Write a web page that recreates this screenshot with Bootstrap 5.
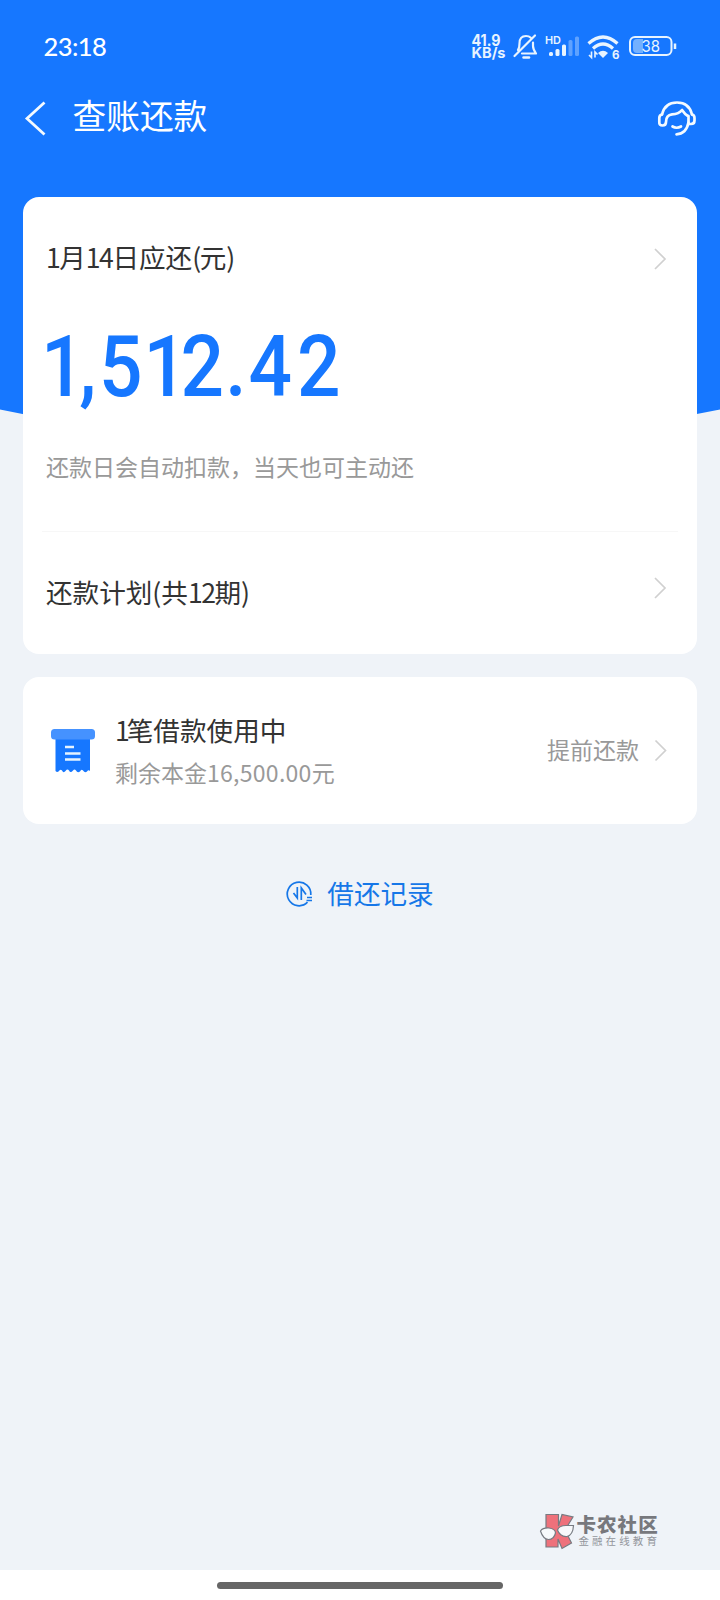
<!DOCTYPE html>
<html lang="zh-CN">
<head>
<meta charset="utf-8">
<meta name="viewport" content="width=device-width, initial-scale=1">
<title>查账还款</title>
<link rel="stylesheet" href="https://cdn.jsdelivr.net/npm/bootstrap@5.3.0/dist/css/bootstrap.min.css">
<style>
body{background:#eff3f8;font-family:"Noto Sans CJK SC",sans-serif;color:#333;margin:0}
svg{display:block;flex:none;overflow:visible}
.screen{width:720px;height:1600px;overflow:hidden}
.hero-bg{left:0;top:0}
.statusbar{height:92px;padding:0 44px 0 43.5px}
.clock{font:500 25.5px/1 "Lato",sans-serif;letter-spacing:-.6px;padding-top:2px}
.titlebar{height:104.5px;padding:0 23px 52px 24px}
.page-title{font-size:33.7px;line-height:48px;margin:0 0 7px 26.5px;font-weight:400}
.content{padding:0 23px}
.panel{border:0;border-radius:16px;background:#fff}
.due{height:457.5px;padding:40px 23px 0}
.row-main{font-size:26.6px;line-height:40px}
.tight{letter-spacing:-1.5px}
.amount{margin:40px 0 17px}
.hint{font-size:23px;color:#999;line-height:36px}
.rule{height:1px;background:#f7f7f7;margin:47px -4px 40.5px}
.loan{height:147px;margin-top:22.5px;padding:0 29px 0 27px}
.early{margin-bottom:2px}
.records{margin-top:49px;color:#1677e8}
.watermark{padding:0 60px 20px 0}
.wm-name{font-size:19.5px;line-height:21px;letter-spacing:1.1px;font-weight:900;color:#77787d}
.wm-sub{font-size:10.5px;line-height:14px;letter-spacing:3.1px;color:#93969c;margin:0 0 2px 2px}
.homebar{height:30px;background:#fff;padding-top:12px}
.pill{width:286px;height:7px;border-radius:4px;background:#666}
</style>
</head>
<body>
<div class="screen position-relative d-flex flex-column">
  <svg class="hero-bg position-absolute" width="720" height="450"><path d="M0 0H720V409.500Q360 485 0 409.500Z" fill="#1677ff"/></svg>

  <div class="statusbar position-relative d-flex align-items-center justify-content-between text-white">
    <span class="clock">23:18</span>
    <svg width="208" height="40" viewBox="468 26 208 40" fill="none" stroke="#e8f4ff">
      <g fill="#e8f4ff" stroke="none" font-family="Inter,sans-serif" font-weight="700">
        <text x="471.500" y="45.700" font-size="15.500" textLength="29" lengthAdjust="spacingAndGlyphs">41.9</text>
        <text x="471.500" y="58.300" font-size="14.500" textLength="34" lengthAdjust="spacingAndGlyphs">KB/s</text>
        <text x="545" y="43.500" font-size="10.500" textLength="16" lengthAdjust="spacingAndGlyphs" font-weight="600">HD</text>
        <text x="612" y="59" font-size="11.500">6</text>
      </g>
      <g stroke-width="2.200" stroke-linecap="round" stroke-linejoin="round">
        <path d="M535 35.500 514.500 56M518 50Q519.500 48 519.500 43.500C519.500 38 522 36 526 36Q529 36 530.500 37.500M533 42.500V46Q533 49 536 53.500H522"/>
        <path d="M523.500 57.500H529" stroke-width="2.500"/>
      </g>
      <g stroke="none" fill="#e8f4ff">
        <rect x="549" y="52" width="4" height="4" rx="1.500"/><rect x="555.500" y="49" width="4" height="7" rx="1.500"/><rect x="562" y="44.500" width="4" height="11.500" rx="1.500"/>
        <rect x="568.500" y="40" width="4" height="16" rx="1.500" opacity=".35"/><rect x="575" y="36.500" width="4" height="19.500" rx="1.500" opacity=".35"/>
      </g>
      <g stroke-width="3.200">
        <path d="M588.500 43.500Q603 30.500 617.500 43.500"/><path d="M593 48.500Q603 39.500 613 48.500"/>
        <path d="M603 58 598 53Q603 48.500 608 53Z" fill="#e8f4ff" stroke="none"/>
        <path d="M591.500 51.500V57.500L589 55M595 57.500V52L597.500 54.500" stroke-width="1.600"/>
      </g>
      <rect x="630" y="37" width="41.500" height="18" rx="5" stroke-width="2"/>
      <path d="M637 39H643V53H637Q633 53 633 49V43Q633 39 637 39Z" fill="#73b0ff" stroke="none"/>
      <path d="M675 43.500V49" stroke-width="2.500"/>
      <text x="641.500" y="52" font-family="Inter,sans-serif" font-size="16" textLength="18.500" lengthAdjust="spacingAndGlyphs" fill="#e8f4ff" stroke="none">38</text>
    </svg>
  </div>

  <header class="titlebar position-relative d-flex align-items-center text-white">
    <svg width="22" height="34" viewBox="0 0 22 34" fill="none" stroke="#f4faff" stroke-width="2.800"><path d="M20.500 1.500 3 17.500 20.500 33.500"/></svg>
    <h1 class="page-title">查账还款</h1>
    <svg class="ms-auto" width="39" height="36" viewBox="658 99 39 36" fill="none" stroke="#f4faff" stroke-width="2.700" stroke-linecap="round" stroke-linejoin="round">
      <path d="M662 113.500C664 105 670 101.500 677 101.500S690 105 692 113.500"/>
      <path d="M688.500 121.500V115.500Q685 113.500 682 109Q679 113 672 113.300Q666 114 666 121Q666 124.500 662.500 124.500T659.300 121V117Q659.300 114 662 113.500M688.500 115V123H691Q694.500 123 694.500 119.500V117Q694.500 114 692 113.500"/>
      <path d="M688.500 121.500C687 129 683 133 676.500 133.300M672.500 125.500Q676.500 128 681 125.500"/>
    </svg>
  </header>

  <main class="content position-relative flex-grow-1">
    <section class="card panel due">
      <div class="row-main d-flex align-items-center justify-content-between">
        <span><span class="tight">1</span>月<span class="tight">14</span>日应还<span class="tight">(</span>元<span class="tight">)</span></span>
        <svg class="me-2 mt-1" width="12" height="22" fill="none" stroke="#d0d0d0" stroke-width="1.700"><path d="M1 1 11 11 1 21"/></svg>
      </div>
      <svg class="amount" width="340" height="114" viewBox="0 0 340 114">
        <text transform="scale(.89 1)" x="-5.500 37.500 59.500 109.500 151 201.500 227.500 282" y="78.500" font-family="Roboto,sans-serif" font-weight="500" font-size="86" fill="#1677ff">1,512.42</text>
      </svg>
      <div class="hint">还款日会自动扣款，当天也可主动还</div>
      <div class="rule"></div>
      <div class="row-main d-flex align-items-center justify-content-between">
        <span>还款计划(共<span class="tight">12</span>期)</span>
        <svg class="me-2 mb-2" width="12" height="22" fill="none" stroke="#d0d0d0" stroke-width="1.700"><path d="M1 1 11 11 1 21"/></svg>
      </div>
    </section>

    <section class="card panel loan d-flex flex-row align-items-center">
      <svg width="45" height="45" viewBox="50 728.500 45 45">
        <path d="M55.500 738H90V771.500Q88.500 770 87 772Q85 774 83 771Q81.500 769 80 772Q77.500 774 76 771Q74.500 769 73 771Q70.500 774 69 771Q67.500 769 65.500 771.500Q63.500 774 62 771Q60.500 769 58.500 772Q57 773 55.500 771.500Z" fill="#1677ff"/>
        <rect x="51" y="729.500" width="44" height="10.500" rx="3.500" fill="#4592ff"/>
        <path d="M65 747.500H74M65 754H80.500M65 760H80.500" stroke="#e5f3ff" stroke-width="2.400"/>
      </svg>
      <div class="ms-3 ps-1">
        <div class="row-main"><span style="letter-spacing:-3px">1</span>笔借款使用中</div>
        <div class="hint mt-1">剩余本金<span style="letter-spacing:.28px">16,500.00</span>元</div>
      </div>
      <span class="hint early ms-auto me-3">提前还款</span>
      <svg width="13" height="22" viewBox="1.500 -.5 13 22" fill="none" stroke="#d0d0d0" stroke-width="1.700"><path d="M2 1 12 11 2 21"/></svg>
    </section>

    <div class="records row-main d-flex align-items-center justify-content-center">
      <svg width="27" height="28" viewBox="286 880 27 28" fill="none" stroke="#1677e8" stroke-width="1.700">
        <path d="M307.500 903.200A11.800 11.800 0 1 1 310.800 896M293.500 894 297.300 899V888M301.300 901V889L306 895.500" />
        <path d="M307 898.500H312M306.500 901.500H312" stroke-width="1.500"/>
      </svg>
      <span style="margin-left:14px">借还记录</span>
    </div>
  </main>

  <div class="watermark position-relative d-flex justify-content-end align-items-center">
    <svg width="36" height="37" viewBox="540 1512 36 37" stroke="#777b82" stroke-width="1.200">
      <path d="M546 1513.500H558.500V1525L562 1513.500 573 1516 565 1529 571.500 1542 562 1547.500 558 1538V1546H546Z" fill="#ee717b"/>
      <path d="M540.500 1530Q543 1526.500 549 1527Q555.500 1528 555.500 1532Q554 1538.500 548.500 1538.500Q543 1538 540.500 1530ZM557.500 1529Q559 1524.500 566 1524.500H573.500Q573 1534 567 1535.500Q560 1536 557.500 1529Z" fill="#f7f9fb"/>
    </svg>
    <div class="text-nowrap">
      <div class="wm-name">卡农社区</div>
      <div class="wm-sub">金融在线教育</div>
    </div>
  </div>
  <footer class="homebar position-relative"><div class="pill mx-auto"></div></footer>
</div>
<script src="https://cdn.jsdelivr.net/npm/bootstrap@5.3.0/dist/js/bootstrap.bundle.min.js"></script>
</body>
</html>
